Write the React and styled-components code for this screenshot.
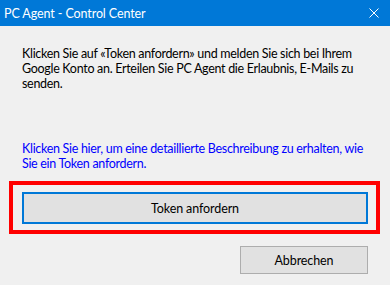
import React from "react";
import styled, { createGlobalStyle } from "styled-components";

const GlobalStyle = createGlobalStyle`
  html, body {
    margin: 0;
    padding: 0;
    background: #f0f0f0;
  }
  * {
    box-sizing: border-box;
  }
`;

const Window = styled.div`
  width: 390px;
  height: 285px;
  display: flex;
  flex-direction: column;
  background: #f0f0f0;
  font-family: Lato, "Noto Sans", sans-serif;
  font-size: 12.5px;
  letter-spacing: -0.3px;
  overflow: hidden;
`;

const TitleBar = styled.div`
  height: 26px;
  flex: none;
  display: flex;
  align-items: center;
  justify-content: space-between;
  padding: 0 11px 0 4px;
  background: #0078d7;
  color: #ffffff;
  font-size: 12.5px;
  letter-spacing: -0.1px;
`;

const CloseButton = styled.div`
  width: 10px;
  height: 10px;
  display: flex;
  align-items: center;
  justify-content: center;
`;

const Body = styled.div`
  display: flex;
  flex-direction: column;
  padding-top: 20px;
`;

const Text = styled.p`
  margin: ${(props) => (props.spaced ? "50px" : "0")} 22px 0 22px;
  line-height: 15px;
  white-space: nowrap;
  color: ${(props) => (props.link ? "#0000ff" : "#000000")};
  cursor: ${(props) => (props.link ? "pointer" : "default")};
`;

const Highlight = styled.div`
  margin: 10px 10px 0 9px;
  border: 4px solid #ff0000;
  padding: 7px 8px 6px 9px;
`;

const Button = styled.button`
  display: flex;
  align-items: center;
  justify-content: center;
  width: ${(props) => props.width || "100%"};
  height: ${(props) => props.height || "28px"};
  padding: 0;
  background: #e1e1e1;
  border: ${(props) => (props.focused ? "2px solid #0078d7" : "1px solid #adadad")};
  color: #000000;
  font-family: inherit;
  font-size: 12.5px;
  letter-spacing: -0.1px;
`;

const Footer = styled.div`
  display: flex;
  justify-content: flex-end;
  padding: 12px 22px 0 0;
`;

export default function App() {
  return (
    <>
      <GlobalStyle />
      <Window>
        <TitleBar>
          <span>PC Agent - Control Center</span>
          <CloseButton>
            <svg width="10" height="10" viewBox="0 0 10 10">
              <path d="M0.5 0.5 L9.5 9.5 M9.5 0.5 L0.5 9.5" stroke="#ffffff" strokeWidth="1" />
            </svg>
          </CloseButton>
        </TitleBar>
        <Body>
          <Text>
            Klicken Sie auf «Token anfordern» und melden Sie sich bei Ihrem
            <br />
            Google Konto an. Erteilen Sie PC Agent die Erlaubnis, E-Mails zu
            <br />
            senden.
          </Text>
          <Text link spaced>
            Klicken Sie hier, um eine detaillierte Beschreibung zu erhalten, wie
            <br />
            Sie ein Token anfordern.
          </Text>
          <Highlight>
            <Button focused height="32px">
              Token anfordern
            </Button>
          </Highlight>
          <Footer>
            <Button width="128px">Abbrechen</Button>
          </Footer>
        </Body>
      </Window>
    </>
  );
}
